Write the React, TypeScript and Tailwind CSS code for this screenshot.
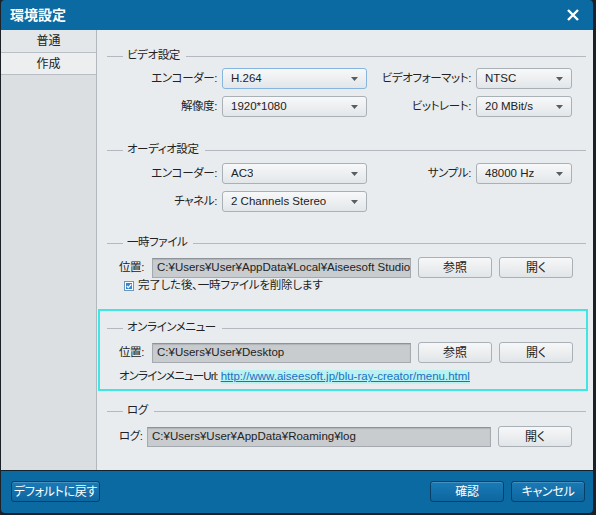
import React from 'react'

const FONT = "font-['Liberation_Sans','Noto_Sans_CJK_JP',sans-serif] [font-feature-settings:'palt']"
const LABEL_TEXT = 'text-[11.5px] tracking-[-0.4px] leading-none whitespace-nowrap'

function GroupHeader({ title }: { title: string }) {
    return (
        <div className="flex items-center h-[14px]">
            <div className="w-[16px] h-px bg-[#b3b9be]" />
            <span className={`pl-[4px] pr-[6px] ${LABEL_TEXT}`}>{title}</span>
            <div className="flex-1 h-px bg-[#b3b9be]" />
        </div>
    )
}

function Combo({ value, width, focused }: { value: string; width: string; focused?: boolean }) {
    return (
        <div
            className={`${width} h-[21px] flex items-center justify-between pl-[8px] pr-[8px] rounded-[3px] border bg-gradient-to-b from-[#f7f8f9] to-[#e3e6e9] ${
                focused ? 'border-[#86b6e0]' : 'border-[#a9b0b6]'
            }`}
        >
            <span className="text-[11.5px] leading-none whitespace-nowrap overflow-hidden">{value}</span>
            <svg width="7" height="4" viewBox="0 0 7 4" className="shrink-0">
                <path d="M0 0 L7 0 L3.5 4 Z" fill="#565e64" />
            </svg>
        </div>
    )
}

function Label({ text, width }: { text: string; width: string }) {
    return <div className={`${width} text-right pr-[5px] ${LABEL_TEXT}`}>{text}</div>
}

function PathInput({ value, width }: { value: string; width: string }) {
    return (
        <div
            className={`${width} h-[20px] flex items-center pl-[4px] bg-[#c8cccf] border border-[#a4aaaf] border-t-[#8d9398] shadow-[inset_0_1px_1px_rgba(0,0,0,0.12)] overflow-hidden`}
        >
            <span className="text-[11.5px] leading-none whitespace-nowrap">{value}</span>
        </div>
    )
}

function Button({ text }: { text: string }) {
    return (
        <div className="w-[74px] h-[21px] flex items-center justify-center rounded-[3px] border border-[#a9b0b6] bg-gradient-to-b from-[#f6f7f8] to-[#e2e5e8] text-[12px] leading-none">
            {text}
        </div>
    )
}

function FooterButton({ text, width }: { text: string; width: string }) {
    return (
        <div
            className={`${width} h-[21px] flex items-center justify-center rounded-[3px] border border-[#073f66] bg-gradient-to-b from-[#1a7ab5] to-[#0d67a0] shadow-[inset_0_1px_0_rgba(255,255,255,0.18)] text-white text-[12px] tracking-[-0.3px] leading-none`}
        >
            {text}
        </div>
    )
}

function Checkbox() {
    return (
        <svg width="10" height="10" viewBox="0 0 10 10" className="shrink-0">
            <rect x="0.5" y="0.5" width="9" height="9" fill="#ffffff" stroke="#6f95b8" />
            <rect x="2" y="2" width="6" height="6" fill="#2f86d4" />
            <path d="M2.8 5 L4.4 6.6 L7.3 3.3" stroke="#ffffff" strokeWidth="1.3" fill="none" />
        </svg>
    )
}

export default function App() {
    return (
        <div className={`w-[596px] h-[515px] bg-[#1b2126] pl-[1px] pr-[3px] pb-[2px] text-[#222222] ${FONT}`}>
            <div className="w-full h-full flex flex-col rounded-[4px] overflow-hidden">
                {/* title bar */}
                <div className="h-[30px] shrink-0 bg-[#0b6aa2] flex items-center justify-between pl-[9px] pr-[14px]">
                    <span className="text-white text-[14px] font-bold leading-none">環境設定</span>
                    <svg width="12" height="12" viewBox="0 0 12 12">
                        <path d="M1 1 L11 11 M11 1 L1 11" stroke="#ffffff" strokeWidth="2.4" />
                    </svg>
                </div>

                <div className="flex flex-1 min-h-0">
                    {/* sidebar */}
                    <div className="w-[96px] shrink-0 flex flex-col bg-[#dbdfe2] border-r border-[#b2b8bd]">
                        <div className="h-[23px] flex items-center justify-center bg-[#e4e7e9] border-b border-[#b8bec3] text-[12px] leading-none">
                            普通
                        </div>
                        <div className="h-[22px] flex items-center justify-center bg-[#eceef0] border-b border-[#b8bec3] text-[12px] leading-none">
                            作成
                        </div>
                    </div>

                    {/* content */}
                    <div className="flex-1 flex flex-col bg-[#e9ecee] pt-[17px]">
                        <div className="ml-[1px] mr-[5px] border-2 border-transparent pl-[7px]">
                            <GroupHeader title="ビデオ設定" />
                            <div className="flex items-center mt-[5px]">
                                <Label text="エンコーダー:" width="w-[115px]" />
                                <Combo value="H.264" width="w-[145px]" focused />
                                <Label text="ビデオフォーマット:" width="w-[109px]" />
                                <Combo value="NTSC" width="w-[96px]" />
                            </div>
                            <div className="flex items-center mt-[7px]">
                                <Label text="解像度:" width="w-[115px]" />
                                <Combo value="1920*1080" width="w-[145px]" />
                                <Label text="ビットレート:" width="w-[109px]" />
                                <Combo value="20 MBit/s" width="w-[96px]" />
                            </div>
                        </div>

                        <div className="ml-[1px] mr-[5px] mt-[22px] border-2 border-transparent pl-[7px]">
                            <GroupHeader title="オーディオ設定" />
                            <div className="flex items-center mt-[6px]">
                                <Label text="エンコーダー:" width="w-[115px]" />
                                <Combo value="AC3" width="w-[145px]" />
                                <Label text="サンプル:" width="w-[109px]" />
                                <Combo value="48000 Hz" width="w-[96px]" />
                            </div>
                            <div className="flex items-center mt-[7px]">
                                <Label text="チャネル:" width="w-[115px]" />
                                <Combo value="2 Channels Stereo" width="w-[145px]" />
                            </div>
                        </div>

                        <div className="ml-[1px] mr-[5px] mt-[20px] border-2 border-transparent pl-[7px]">
                            <GroupHeader title="一時ファイル" />
                            <div className="flex items-center mt-[7px] gap-[7px]">
                                <div className={`w-[38px] pl-[12px] ${LABEL_TEXT}`}>位置:</div>
                                <PathInput value="C:¥Users¥User¥AppData¥Local¥Aiseesoft Studio¥" width="w-[259px]" />
                                <Button text="参照" />
                                <Button text="開く" />
                            </div>
                            <div className="flex items-center h-[14px] mt-[1px] pl-[17px] gap-[4px]">
                                <Checkbox />
                                <span className="text-[11.5px] tracking-[-0.2px] leading-none">完了した後、一時ファイルを削除します</span>
                            </div>
                        </div>

                        <div className="ml-[1px] mr-[5px] mt-[14px] border-2 border-[#3fe6e3] pl-[7px] pt-[10px] pb-[5px]">
                            <GroupHeader title="オンラインメニュー" />
                            <div className="flex items-center mt-[7px] gap-[7px]">
                                <div className={`w-[38px] pl-[12px] ${LABEL_TEXT}`}>位置:</div>
                                <PathInput value="C:¥Users¥User¥Desktop" width="w-[259px]" />
                                <Button text="参照" />
                                <Button text="開く" />
                            </div>
                            <div className="flex items-center h-[14px] mt-[7px] pl-[12px] gap-[3px]">
                                <span className="text-[11.5px] tracking-[-0.9px] leading-none whitespace-nowrap">オンラインメニューUrl:</span>
                                <a href="#" className="text-[11.5px] leading-none text-[#1d6fc4] underline bg-[#b9f2f1] py-[1px]">
                                    http://www.aiseesoft.jp/blu-ray-creator/menu.html
                                </a>
                            </div>
                        </div>

                        <div className="ml-[1px] mr-[5px] mt-[11px] border-2 border-transparent pl-[7px]">
                            <GroupHeader title="ログ" />
                            <div className="flex items-center mt-[8px] gap-[7px]">
                                <div className={`w-[33px] pl-[12px] ${LABEL_TEXT}`}>ログ:</div>
                                <PathInput value="C:¥Users¥User¥AppData¥Roaming¥log" width="w-[344px]" />
                                <Button text="開く" />
                            </div>
                        </div>
                    </div>
                </div>

                {/* footer */}
                <div className="h-[43px] shrink-0 bg-[#0b6aa2] border-t border-[#14222c] flex items-start pt-[10px] pl-[10px] pr-[8px]">
                    <FooterButton text="デフォルトに戻す" width="w-[89px]" />
                    <div className="flex-1" />
                    <div className="flex gap-[7px]">
                        <FooterButton text="確認" width="w-[74px]" />
                        <FooterButton text="キャンセル" width="w-[74px]" />
                    </div>
                </div>
            </div>
        </div>
    )
}
